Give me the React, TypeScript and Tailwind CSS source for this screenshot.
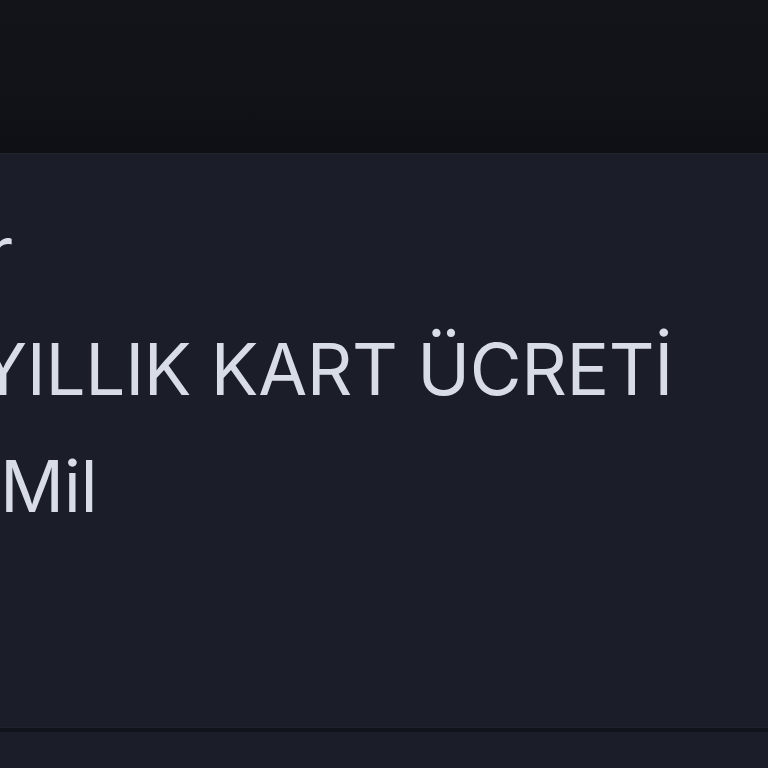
export default function App() {
  return (
    <div className="w-[768px] h-[768px] overflow-hidden bg-[#1b1e28] flex flex-col" style={{ fontFamily: "Inter, 'Noto Sans', sans-serif" }}>
      <div className="h-[153px] shrink-0 bg-gradient-to-b from-[#121419] via-[#111318] to-[#0e1016]" />
      <div className="h-[575px] shrink-0 bg-[#1b1e28] border-t border-[#22252e] border-b border-b-[#20232c] flex flex-col text-[71px] leading-[117px] tracking-[-0.005em] text-[#d8dce6] font-normal pt-[40px]">
        <div className="flex justify-end w-[13px] whitespace-nowrap">Kartlar</div>
        <div className="ml-[-21px] whitespace-nowrap">YILLIK KART ÜCRETİ</div>
        <div className="ml-[0px] whitespace-nowrap">Mil</div>
      </div>
      <div className="h-[4px] shrink-0 bg-[#10131a]" />
      <div className="flex-1 bg-[#1b1e28]" />
    </div>
  );
}
